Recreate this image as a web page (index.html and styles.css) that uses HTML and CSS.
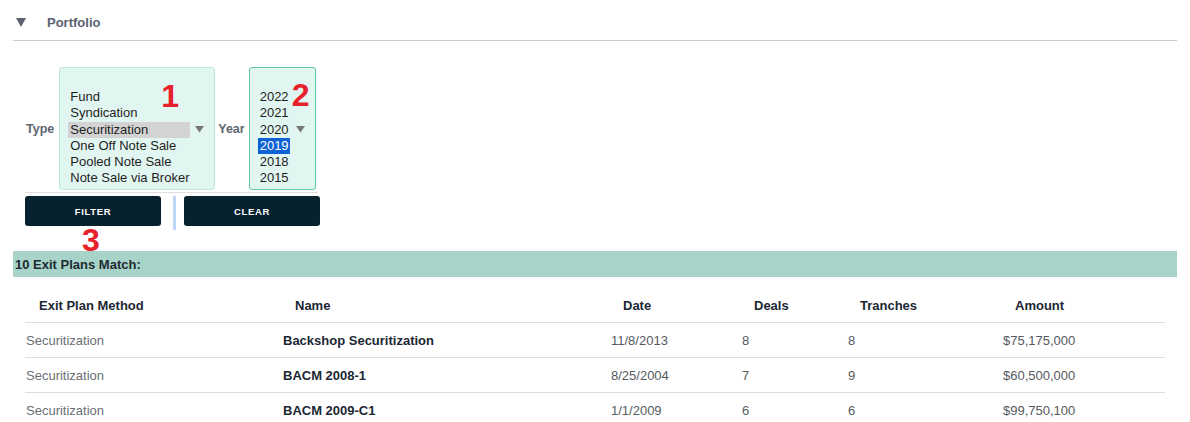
FILE: index.html
```html
<!DOCTYPE html>
<html lang="en">
<head>
<meta charset="utf-8">
<title>Portfolio</title>
<link rel="stylesheet" href="styles.css">
</head>
<body>
<div class="page">
  <div class="section-head">
    <svg class="caret" width="10" height="9" viewBox="0 0 10 9"><polygon points="0,0 10,0 5,9" fill="#5a6271"/></svg>
    <span class="section-title">Portfolio</span>
  </div>

  <div class="form">
    <div class="filter-row">
      <label class="field-label">Type</label>
      <div class="listbox listbox-type">
        <div class="options options-type">
          <div class="opt">Fund</div>
          <div class="opt">Syndication</div>
          <div class="opt opt-sel-grey">Securitization</div>
          <div class="opt">One Off Note Sale</div>
          <div class="opt">Pooled Note Sale</div>
          <div class="opt">Note Sale via Broker</div>
          <div class="opt">Whole Loan Sale</div>
        </div>
        <svg class="dd-arrow" width="9" height="7" viewBox="0 0 9 7"><polygon points="0,0 9,0 4.5,6.5" fill="#777"/></svg>
        <span class="marker marker-1">1</span>
      </div>
      <label class="field-label field-label-year">Year</label>
      <div class="listbox listbox-year">
        <div class="options options-year">
          <div class="opt">2022</div>
          <div class="opt">2021</div>
          <div class="opt">2020</div>
          <div class="opt opt-sel-blue">2019</div>
          <div class="opt">2018</div>
          <div class="opt">2015</div>
          <div class="opt">2014</div>
        </div>
        <svg class="dd-arrow dd-arrow-year" width="9" height="7" viewBox="0 0 9 7"><polygon points="0,0 9,0 4.5,6.5" fill="#777"/></svg>
        <span class="marker marker-2">2</span>
      </div>
    </div>
    <div class="form-rule"></div>
    <div class="button-row">
      <button class="btn">FILTER</button>
      <div class="btn-divider"></div>
      <button class="btn">CLEAR</button>
      <span class="marker marker-3">3</span>
    </div>
  </div>

  <div class="result-bar">10 Exit Plans Match:</div>

  <div class="grid">
    <div class="grid-row grid-head">
      <div class="cell">Exit Plan Method</div>
      <div class="cell">Name</div>
      <div class="cell">Date</div>
      <div class="cell">Deals</div>
      <div class="cell">Tranches</div>
      <div class="cell">Amount</div>
    </div>
    <div class="grid-row">
      <div class="cell c-method">Securitization</div>
      <div class="cell c-name">Backshop Securitization</div>
      <div class="cell">11/8/2013</div>
      <div class="cell">8</div>
      <div class="cell">8</div>
      <div class="cell">$75,175,000</div>
    </div>
    <div class="grid-row">
      <div class="cell c-method">Securitization</div>
      <div class="cell c-name">BACM 2008-1</div>
      <div class="cell">8/25/2004</div>
      <div class="cell">7</div>
      <div class="cell">9</div>
      <div class="cell">$60,500,000</div>
    </div>
    <div class="grid-row">
      <div class="cell c-method">Securitization</div>
      <div class="cell c-name">BACM 2009-C1</div>
      <div class="cell">1/1/2009</div>
      <div class="cell">6</div>
      <div class="cell">6</div>
      <div class="cell">$99,750,100</div>
    </div>
  </div>
</div>
</body>
</html>
```

FILE: styles.css
```css
* { box-sizing: border-box; }

html, body {
  margin: 0;
  padding: 0;
  background: #ffffff;
}

body {
  font-family: "Liberation Sans", Arial, Helvetica, sans-serif;
  color: #1b2733;
  width: 1190px;
  height: 422px;
  overflow: hidden;
}

.page {
  padding: 0 13px;
}

/* Section header */
.section-head {
  height: 41px;
  display: flex;
  align-items: center;
  padding-left: 3px;
  padding-top: 4px;
  border-bottom: 1px solid #cccccc;
}

.caret {
  display: block;
  margin-right: 21px;
  margin-top: 1px;
}

.section-title {
  font-size: 13px;
  font-weight: bold;
  color: #5a6271;
}

/* Filter form */
.form {
  padding-left: 12px;
  margin-top: 26px;
}

.filter-row {
  display: flex;
  align-items: center;
  padding-left: 1px;
}

.field-label {
  font-size: 12.5px;
  font-weight: bold;
  color: #5d6570;
  margin-right: 5px;
}

.field-label-year {
  margin-right: 4px;
}

.listbox {
  position: relative;
  height: 123px;
  border-radius: 3px;
  background: #e2f6f1;
  display: flex;
  align-items: flex-start;
  overflow: hidden;
}

.listbox-type {
  width: 156px;
  border: 1px solid #bfe9db;
  margin-right: 3px;
  padding-left: 8px;
}

.listbox-year {
  width: 67px;
  border: 1px solid #62c8aa;
  padding-left: 8px;
}

.options {
  padding-top: 21px;
  flex: none;
}

.options-type { width: 122px; }
.options-year { width: 32px; }

.opt {
  font-size: 13px;
  line-height: 16.3px;
  height: 16.3px;
  padding-left: 2px;
  color: #1e1e1e;
  white-space: nowrap;
}

.opt-sel-grey {
  background: #d3d3d3;
}

.opt-sel-blue {
  background: #0f62d5;
  color: #ffffff;
}

.dd-arrow {
  display: block;
  flex: none;
  align-self: center;
  margin-left: 5px;
  margin-top: 1px;
}

.dd-arrow-year {
  margin-left: 6px;
}

/* Annotation numbers */
.marker {
  position: absolute;
  font-size: 32px;
  line-height: 32px;
  font-weight: bold;
  color: #e7212b;
}

.marker-1 { left: 101px; top: 12px; }
.marker-2 { left: 42px; top: 11px; }
.marker-3 { left: 57px; top: 28px; }

.form-rule {
  width: 293px;
  height: 1px;
  background: #e0e0e0;
  margin-top: 2px;
}

.button-row {
  position: relative;
  display: flex;
  align-items: flex-start;
  margin-top: 3px;
  height: 34px;
}

.btn {
  width: 136px;
  height: 30px;
  border: none;
  border-radius: 3px;
  background: #07222f;
  color: #ffffff;
  font-family: "Liberation Sans", Arial, sans-serif;
  font-size: 9.5px;
  font-weight: bold;
  letter-spacing: 0.7px;
  padding: 0;
  cursor: pointer;
}

.btn-divider {
  width: 3px;
  height: 34px;
  background: #bdd7f4;
  margin-left: 12px;
  margin-right: 8px;
}

/* Results */
.result-bar {
  margin-top: 21px;
  height: 26px;
  background: #a8d3c8;
  font-size: 13px;
  font-weight: bold;
  color: #1d2a33;
  display: flex;
  align-items: center;
  padding-left: 2px;
}

.grid {
  margin: 11px 12px 0 12px;
}

.grid-row {
  display: grid;
  grid-template-columns: 257px 328px 131px 106px 155px 163px;
  height: 35px;
  border-bottom: 1px solid #dddddd;
  align-items: center;
  font-size: 13px;
}

.grid-head {
  font-weight: bold;
  color: #1b2733;
}

.grid-head .cell {
  padding-left: 13px;
}

.grid-head .cell:first-child {
  padding-left: 14px;
}

.cell {
  padding-left: 1px;
  white-space: nowrap;
  color: #555a60;
}

.grid-head .cell { color: #1b2733; }

.c-method { color: #6a6e73; }

.c-name {
  font-weight: bold;
  color: #1b2733;
}
```
